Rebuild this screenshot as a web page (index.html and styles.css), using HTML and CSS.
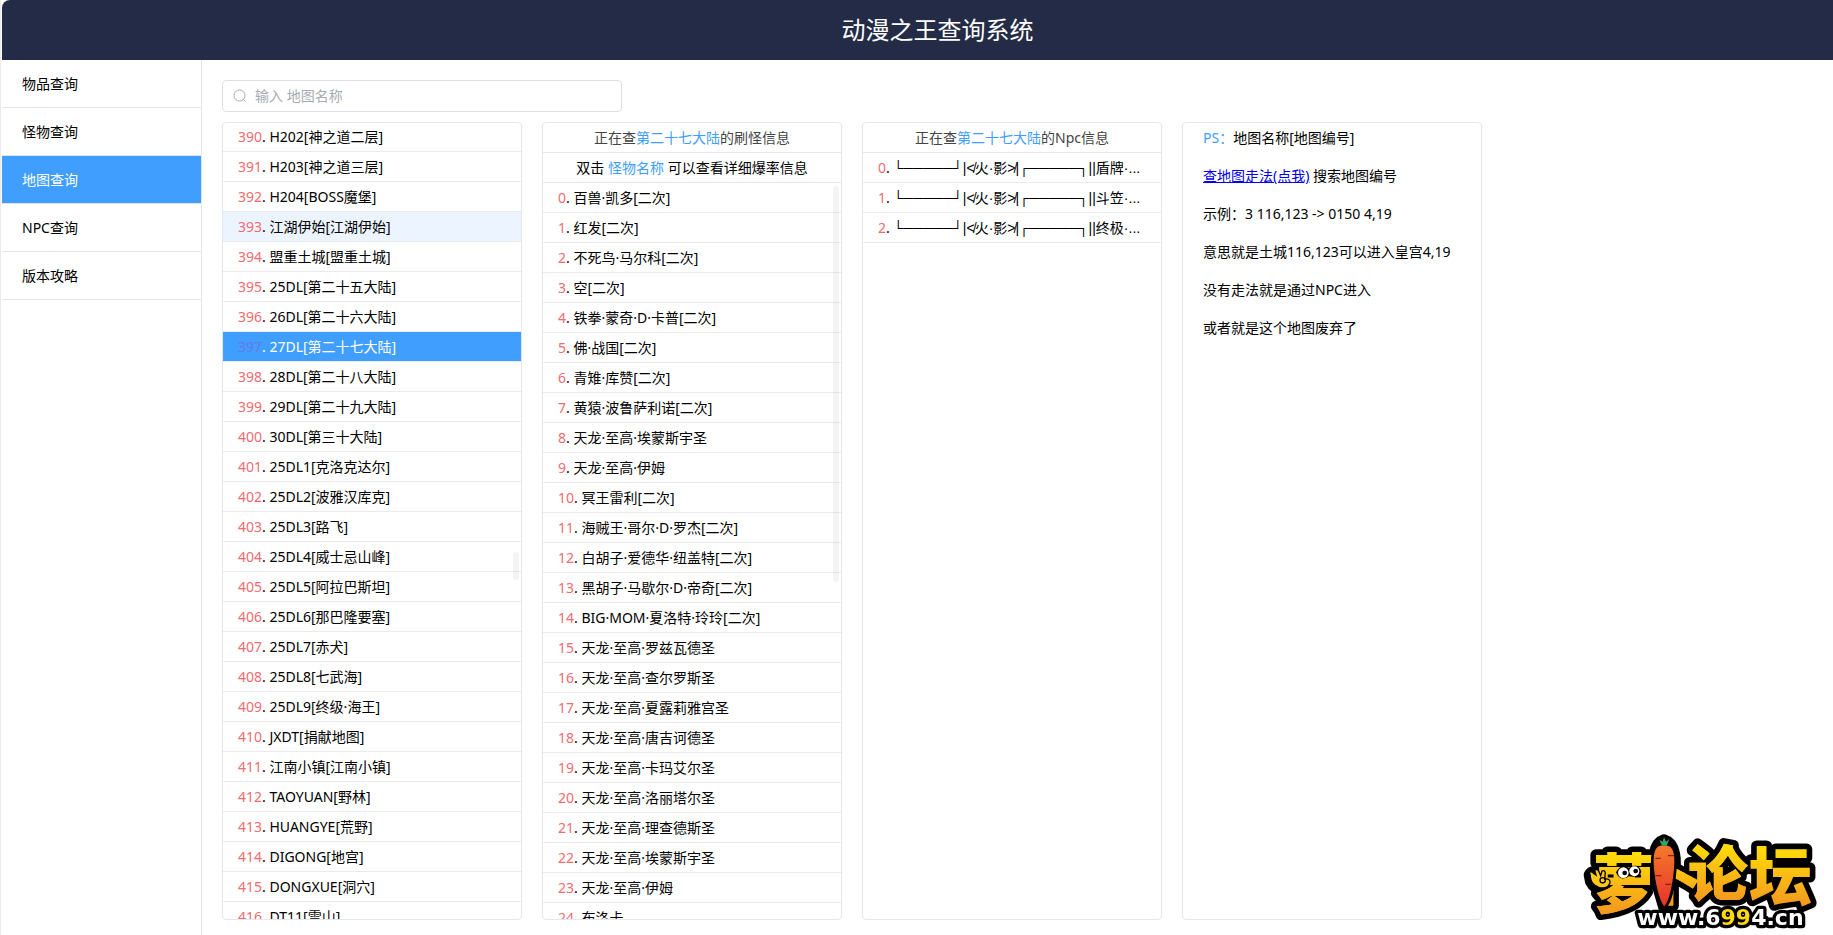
FILE: index.html
```
<!DOCTYPE html>
<html lang="zh-CN">
<head>
    <meta charset="UTF-8">
    <meta name="viewport" content="width=device-width, initial-scale=1.0">
    <title>动漫之王查询系统</title>
    <link rel="stylesheet" href="styles.css">
</head>
<body>
    <div class="app">
        <header class="header">
            <h1>动漫之王查询系统</h1>
        </header>

        <div class="container">
            <nav class="sidebar">
                <a href="#goods">物品查询</a>
                <a href="#monster">怪物查询</a>
                <a href="#map" class="active">地图查询</a>
                <a href="#npc">NPC查询</a>
                <a href="#guide">版本攻略</a>
            </nav>

            <main class="main">
                <label class="search-bar">
                    <svg class="search-icon" viewBox="0 0 14 14" aria-hidden="true">
                        <circle cx="6.5" cy="6.5" r="5.5"/>
                        <path d="M10.4 10.4 12.6 12.8"/>
                    </svg>
                    <input type="text" id="search-input" placeholder="输入 地图名称" aria-label="地图名称">
                </label>

                <div class="panels">
                    <section class="panel">
                        <ul class="list" id="map-list"></ul>
                        <div class="thumb map-thumb"></div>
                    </section>

                    <section class="panel">
                        <h2 class="panel-title">正在查<span class="blue">第二十七大陆</span>的刷怪信息</h2>
                        <p class="panel-tip">双击 <span class="blue">怪物名称</span> 可以查看详细爆率信息</p>
                        <ul class="list" id="monster-list"></ul>
                        <div class="thumb monster-thumb"></div>
                    </section>

                    <section class="panel">
                        <h2 class="panel-title">正在查<span class="blue">第二十七大陆</span>的Npc信息</h2>
                        <ul class="list npc-list" id="npc-list"></ul>
                    </section>

                    <section class="panel notes">
                        <p><span class="blue">PS：</span>地图名称[地图编号]</p>
                        <p><a href="#route">查地图走法(点我)</a> 搜索地图编号</p>
                        <p>示例：3 116,123 -&gt; 0150 4,19</p>
                        <p>意思就是土城116,123可以进入皇宫4,19</p>
                        <p>没有走法就是通过NPC进入</p>
                        <p>或者就是这个地图废弃了</p>
                    </section>
                </div>
            </main>
        </div>
    </div>

    <svg class="forum-logo" viewBox="0 0 819 360" role="img" aria-label="萝卜论坛 www.6994.cn">
        <defs>
            <linearGradient id="gold" x1="0" y1="0" x2="0" y2="1">
                <stop offset="0.25" stop-color="#ffd90a"/>
                <stop offset="0.85" stop-color="#f39a1e"/>
            </linearGradient>
            <linearGradient id="carrot" x1="0" y1="0" x2="0" y2="1">
                <stop offset="0" stop-color="#f47a2a"/>
                <stop offset="1" stop-color="#e8322a"/>
            </linearGradient>
        </defs>
        <!-- hand and carrot outline -->
        <g class="logo-edge">
            <path d="M312 75C280 85 276 135 286 190L312 278 340 190C352 135 346 85 312 75Z"/>
            <path d="M88 180Q95 165 112 172L140 190 130 220Q105 225 92 200Z"/>
        </g>
        <g class="logo-name">
            <text x="98" y="276" font-size="190">萝</text>
            <text x="256" y="254" font-size="170">卜</text>
            <text x="384" y="242" font-size="180">论</text>
            <text x="566" y="256" font-size="190">坛</text>
        </g>
        <g class="logo-name logo-fill">
            <text x="98" y="276" font-size="190" aria-hidden="true">萝</text>
            <text x="256" y="254" font-size="170" aria-hidden="true">卜</text>
            <text x="384" y="242" font-size="180" aria-hidden="true">论</text>
        </g>
        <!-- hand -->
        <path d="M90 178Q86 170 94 170L108 180 104 166Q110 160 116 168L122 182 126 168Q134 164 136 174L134 192Q152 190 150 204Q140 226 114 216Q96 210 92 192Z" fill="#ffc915" stroke="#000" stroke-width="4"/>
        <circle cx="128" cy="196" r="8" fill="none" stroke="#000" stroke-width="4"/>
        <!-- eyes -->
        <path d="M168 172Q184 144 206 158Q236 142 244 170Q238 190 206 184Q180 202 168 172Z" fill="#000"/>
        <circle cx="190" cy="173" r="16" fill="#fff"/>
        <circle cx="223" cy="169" r="15" fill="#fff"/>
        <circle cx="194" cy="174" r="7" fill="#000"/>
        <circle cx="227" cy="168" r="7" fill="#000"/>
        <!-- carrot -->
        <path d="M312 92C284 86 278 116 282 160C286 210 300 260 313 274C328 258 338 210 342 160C346 116 340 86 312 92Z" fill="url(#carrot)" stroke="#000" stroke-width="16" paint-order="stroke"/>
        <path d="M286 130H302M324 122H342M286 182H304M316 208H334" stroke="#8d1d12" stroke-width="4"/>
        <path d="M306 92 298 74 308 80 312 66 318 80 328 72 320 92Z" fill="#2fa866"/>
        <text class="logo-url" x="232" y="331" font-size="66">www.6<tspan fill="#ffd90a">99</tspan>4.cn</text>
    </svg>

    <script src="script.js"></script>
</body>
</html>
```

FILE: styles.css
```
* {
    box-sizing: border-box;
}
body {
    margin: 0;
    background-color: #ffffff;
    color: #000000;
    font-family: "Noto Sans", "DejaVu Sans", "Noto Sans CJK SC", sans-serif;
    font-size: 14px;
    line-height: 20px;
}
.app {
    display: flex;
    flex-direction: column;
    height: 100vh;
    padding-left: 1px;
    border-left: 1px solid #ececec;
}
.header {
    flex: none;
    padding-left: 40px;
    background-color: #242b46;
    border-top-left-radius: 8px;
}
.header h1 {
    margin: 0;
    color: #ffffff;
    font-size: 24px;
    font-weight: 400;
    line-height: 60px;
    text-align: center;
}
.container {
    display: flex;
    flex: 1;
    min-height: 0;
}
.sidebar {
    flex: none;
    width: 200px;
    border-right: 1px solid #e4e4e7;
}
.sidebar a {
    display: block;
    height: 48px;
    padding: 0 20px;
    border-bottom: 1px solid #e4e4e7;
    color: #000000;
    line-height: 47px;
    text-decoration: none;
}
.sidebar a.active {
    background-color: #409eff;
    color: #ffffff;
}
.main {
    display: flex;
    flex: 1;
    flex-direction: column;
    gap: 10px;
    min-width: 0;
    padding: 20px 20px 15px;
}
.search-bar {
    display: flex;
    align-items: center;
    gap: 8px;
    width: 400px;
    height: 32px;
    padding: 0 10px;
    border: 1px solid #dcdfe6;
    border-radius: 4px;
}
.search-icon {
    flex: none;
    width: 14px;
    height: 14px;
    fill: none;
    stroke: #a8abb2;
}
.search-bar input {
    flex: 1;
    min-width: 0;
    padding: 0;
    border: none;
    outline: none;
    background: none;
    font: inherit;
}
.search-bar input::placeholder {
    color: #a8abb2;
}
.panels {
    display: flex;
    flex: 1;
    gap: 20px;
    min-height: 0;
}
.panel {
    position: relative;
    display: flex;
    flex-direction: column;
    width: 300px;
    overflow: hidden;
    border: 1px solid #e4e7ed;
    border-radius: 4px;
}
.panel-title,
.panel-tip {
    flex: none;
    height: 30px;
    margin: 0;
    border-bottom: 1px solid #e4e7ed;
    font-size: 14px;
    font-weight: 400;
    line-height: 29px;
    text-align: center;
}
.panel-title {
    color: #444444;
}
.blue {
    color: #409eff;
}
.list {
    flex: 1;
    margin: 0;
    padding: 0;
    overflow-y: auto;
    list-style: none;
    scrollbar-width: none;
}
.list li {
    height: 30px;
    padding: 0 15px;
    overflow: hidden;
    border-bottom: 1px solid #ebebeb;
    line-height: 29px;
    white-space: nowrap;
    cursor: pointer;
}
.list li.hover {
    background-color: #ecf5ff;
}
.list li.selected {
    background-color: #409eff;
    color: #ffffff;
}
.num {
    color: #f06c70;
}
.selected .num {
    color: #6a78e0;
}
.npc-list .name {
    font-family: "Liberation Sans", "DejaVu Sans", "Noto Sans CJK SC", sans-serif;
}
.thumb {
    position: absolute;
    right: 2px;
    width: 6px;
    border-radius: 3px;
    background-color: rgba(144, 147, 153, 0.1);
}
.map-thumb {
    top: 429px;
    height: 28px;
}
.monster-thumb {
    top: 63px;
    height: 396px;
}
.notes {
    gap: 14px;
    padding: 3px 20px;
}
.notes p {
    margin: 0;
    line-height: 24px;
}
.notes a {
    color: #0000ee;
}
.forum-logo {
    position: fixed;
    right: 0;
    bottom: 0;
    width: 273px;
    height: 120px;
    font-family: "Noto Sans CJK SC", sans-serif;
    font-weight: 900;
}
.logo-edge,
.logo-name {
    stroke: #000000;
    stroke-width: 34px;
    stroke-linejoin: round;
}
.logo-name {
    fill: url(#gold);
    paint-order: stroke;
}
.logo-fill {
    stroke: none;
}
.logo-url {
    fill: #ffffff;
    stroke: #000000;
    stroke-width: 20px;
    stroke-linejoin: round;
    paint-order: stroke;
    font-family: "DejaVu Sans", sans-serif;
    font-weight: 700;
}
```

FILE: script.js
```
const maps = [
    "H202[神之道二层]", "H203[神之道三层]", "H204[BOSS魔堡]", "江湖伊始[江湖伊始]",
    "盟重土城[盟重土城]", "25DL[第二十五大陆]", "26DL[第二十六大陆]", "27DL[第二十七大陆]",
    "28DL[第二十八大陆]", "29DL[第二十九大陆]", "30DL[第三十大陆]", "25DL1[克洛克达尔]",
    "25DL2[波雅汉库克]", "25DL3[路飞]", "25DL4[威士忌山峰]", "25DL5[阿拉巴斯坦]",
    "25DL6[那巴隆要塞]", "25DL7[赤犬]", "25DL8[七武海]", "25DL9[终级·海王]",
    "JXDT[捐献地图]", "江南小镇[江南小镇]", "TAOYUAN[野林]", "HUANGYE[荒野]",
    "DIGONG[地宫]", "DONGXUE[洞穴]", "DT11[雪山]"
];

const monsters = [
    "百兽·凯多[二次]", "红发[二次]", "不死鸟·马尔科[二次]", "空[二次]",
    "铁拳·蒙奇·D·卡普[二次]", "佛·战国[二次]", "青雉·库赞[二次]", "黄猿·波鲁萨利诺[二次]",
    "天龙·至高·埃蒙斯宇圣", "天龙·至高·伊姆", "冥王雷利[二次]", "海贼王·哥尔·D·罗杰[二次]",
    "白胡子·爱德华·纽盖特[二次]", "黑胡子·马歇尔·D·帝奇[二次]", "BIG·MOM·夏洛特·玲玲[二次]",
    "天龙·至高·罗兹瓦德圣", "天龙·至高·查尔罗斯圣", "天龙·至高·夏露莉雅宫圣",
    "天龙·至高·唐吉诃德圣", "天龙·至高·卡玛艾尔圣", "天龙·至高·洛丽塔尔圣",
    "天龙·至高·理查德斯圣", "天龙·至高·埃蒙斯宇圣", "天龙·至高·伊姆", "布洛卡"
];

const npcs = [
    "└─────┘|≮火·影≯|┌─────┐||盾牌·...",
    "└─────┘|≮火·影≯|┌─────┐||斗笠·...",
    "└─────┘|≮火·影≯|┌─────┐||终极·..."
];

function renderList(id, names, start) {
    const list = document.getElementById(id);
    names.forEach((text, i) => {
        const item = document.createElement('li');
        const num = document.createElement('span');
        num.className = 'num';
        num.textContent = start + i;
        const name = document.createElement('span');
        name.className = 'name';
        name.textContent = text;
        item.append(num, '. ', name);
        item.onclick = () => {
            list.querySelectorAll('.selected').forEach(el => el.classList.remove('selected'));
            item.classList.add('selected');
        };
        list.appendChild(item);
    });
    return list;
}

const mapList = renderList('map-list', maps, 390);
mapList.children[3].classList.add('hover');
mapList.children[7].classList.add('selected');
mapList.scrollTop = 1;

renderList('monster-list', monsters, 0);
renderList('npc-list', npcs, 0);
```
